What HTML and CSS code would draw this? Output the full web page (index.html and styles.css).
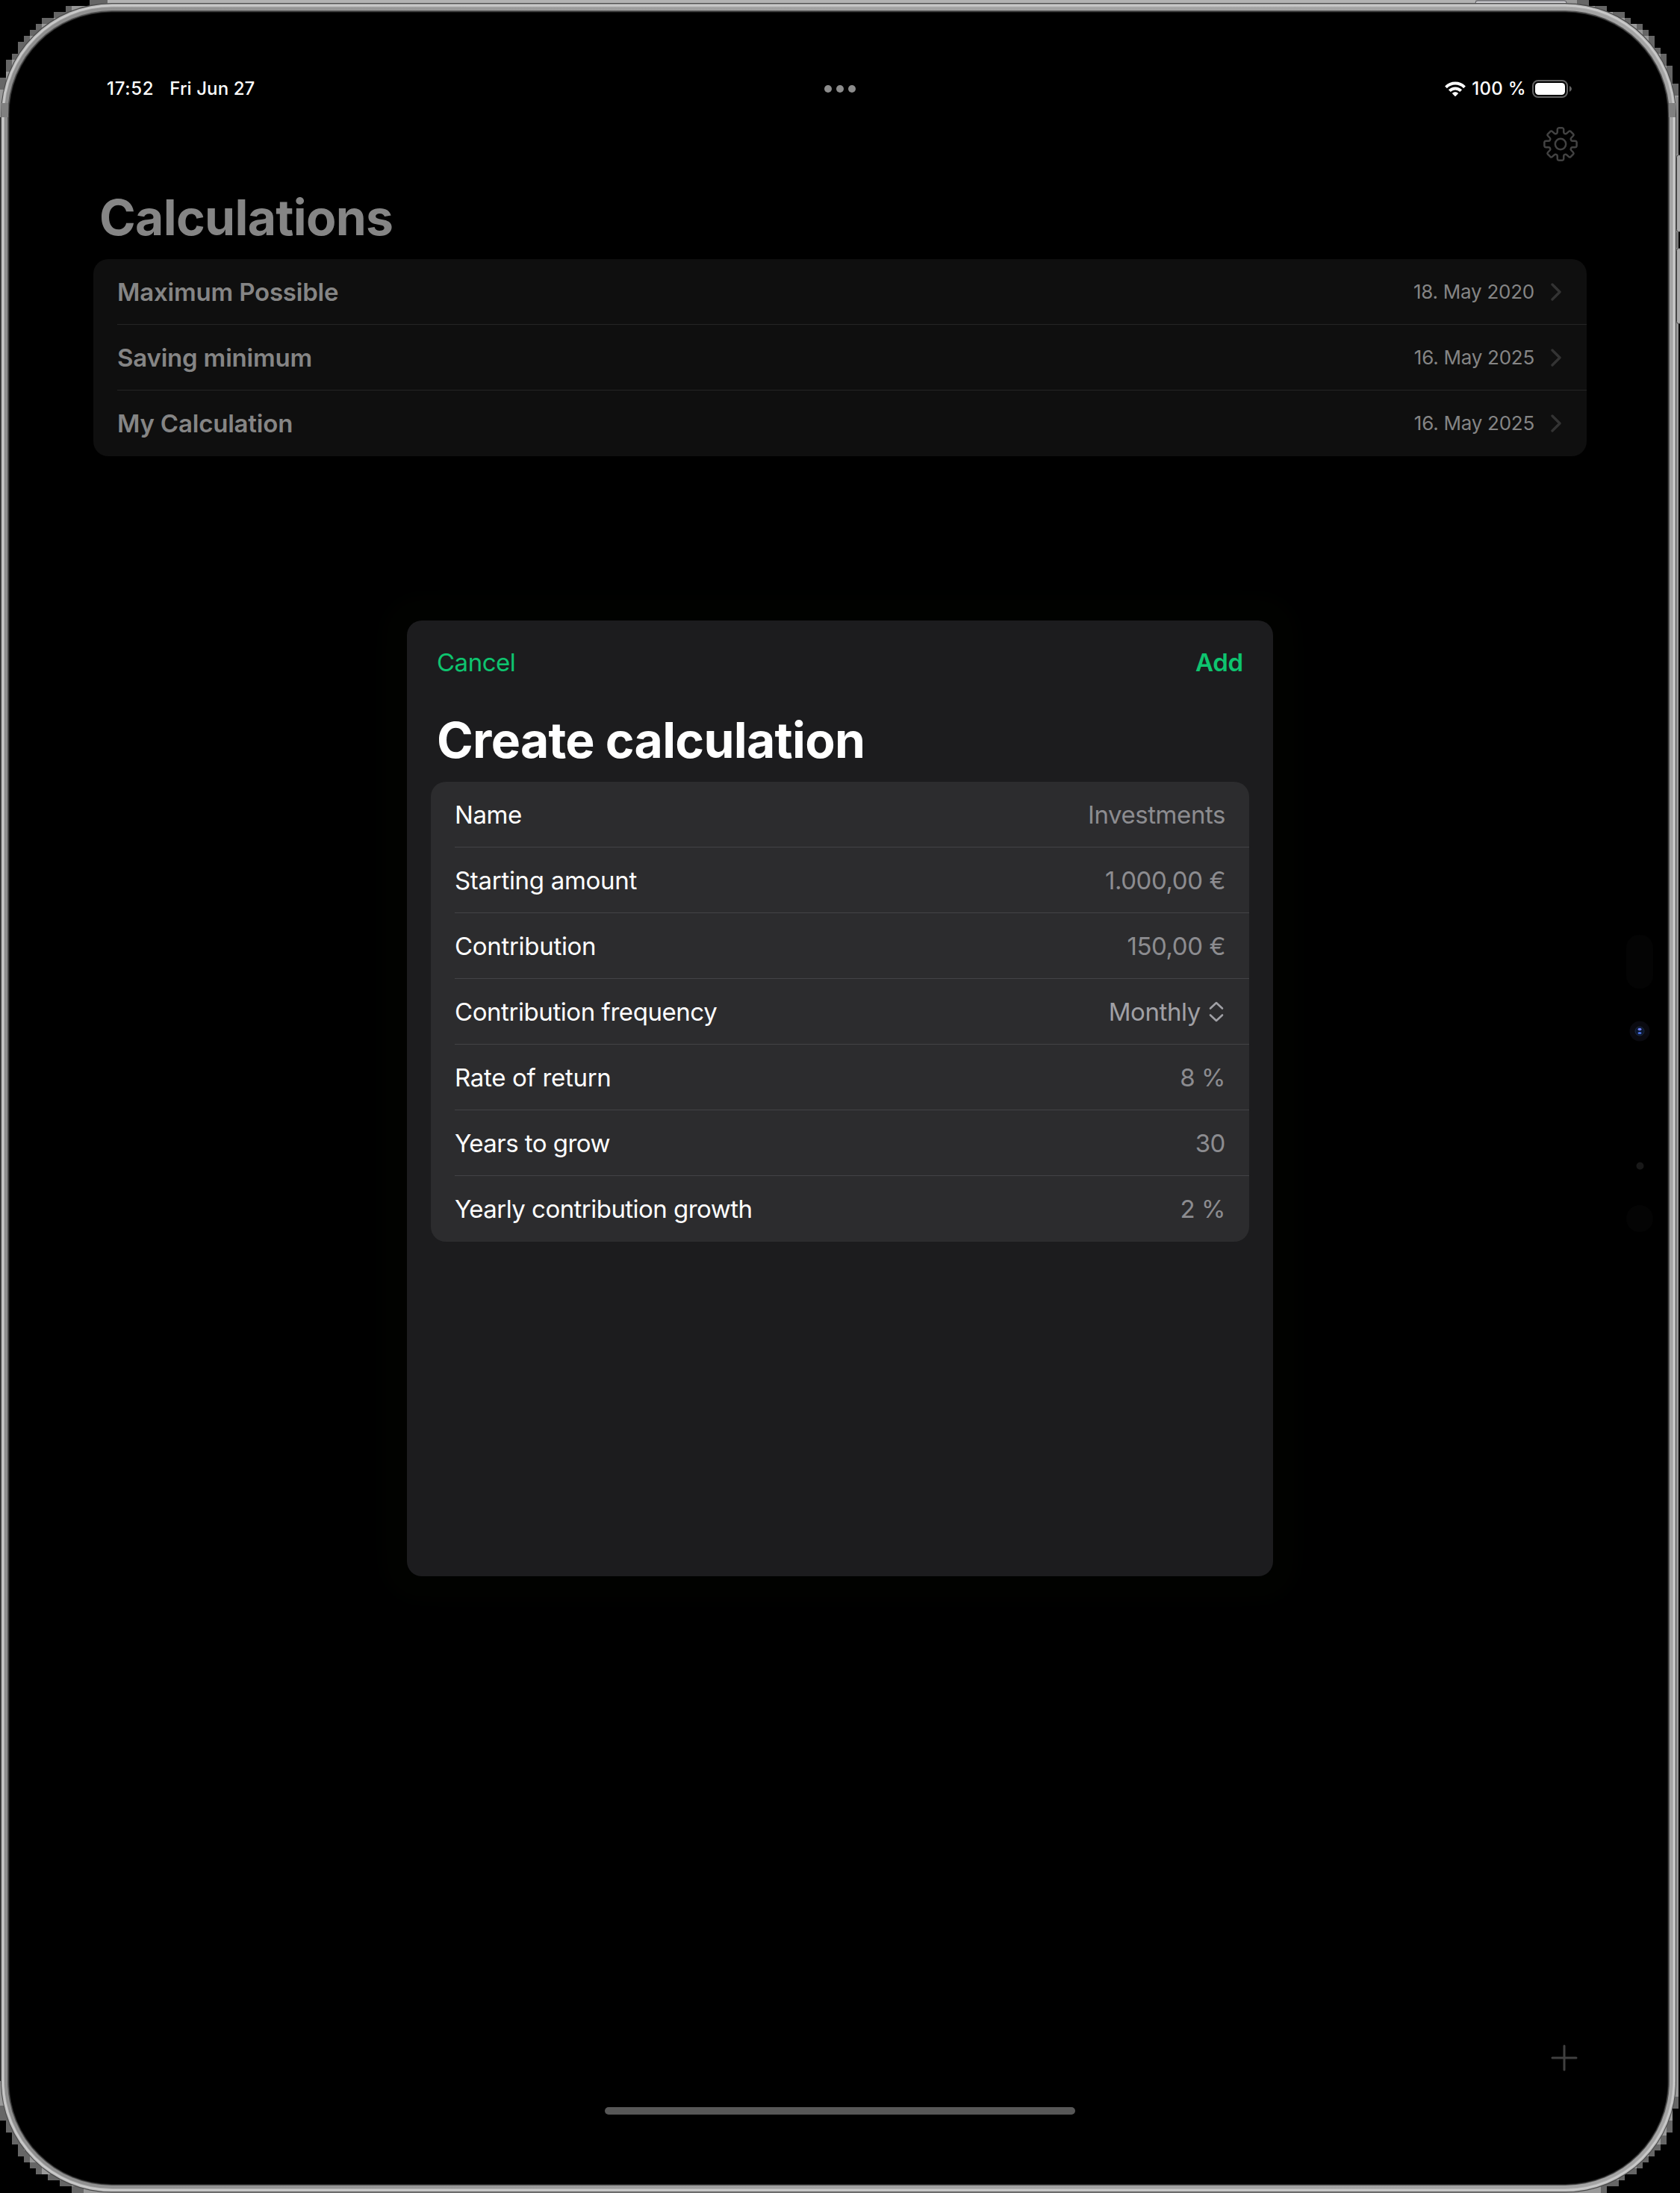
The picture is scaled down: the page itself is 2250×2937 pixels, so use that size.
FILE: index.html
```html
<!DOCTYPE html>
<html lang="en">
<head>
<meta charset="utf-8">
<title>Calculations</title>
<link rel="stylesheet" href="styles.css">
</head>
<body>
<div class="device">
  <svg class="bezel" viewBox="0 0 2250 2937" aria-hidden="true">
    <defs>
      <linearGradient id="metal" x1="0" y1="0" x2="1" y2="0"><stop offset="0" stop-color="#8e8e8e"/><stop offset=".5" stop-color="#a2a2a2"/><stop offset="1" stop-color="#a4a4a4"/></linearGradient>
    </defs>
    <g shape-rendering="crispEdges">
      <path fill="#666" d="M120 0H2128V8H2152V16H2176V24H2184V32H2200V40H2208V48H2216V64H2224V72H2232V88H2240V112H2248V2824H2240V2856H2232V2872H2224V2880H2216V2888H2208V2896H2200V2904H2192V2912H2176V2920H2168V2928H2152V2937H96V2928H80V2920H64V2912H48V2904H40V2896H32V2888H24V2872H16V2856H8V2840H0V104H8V80H16V72H24V56H32V48H40V40H48V32H56V24H72V16H88V8H120Z"/>
      <path fill="#999" d="M144 0H2112V8H2136V16H2160V24H2176V32H2192V40H2200V48H2208V64H2216V72H2224V88H2232V112H2240V128H2248V2808H2240V2840H2232V2860H2224V2872H2208V2888H2192V2904H2168V2920H2144V2937H112V2928H96V2920H80V2912H56V2896H40V2880H32V2864H24V2848H16V2832H8V2820H0V120H8V96H16V80H32V64H40V48H56V32H72V24H96V8H144Z"/>
      <rect x="144" y="0" width="1832" height="4" fill="#b2b2b2"/>
      <rect x="0" y="157" width="1" height="2630" fill="#333"/>
    </g>
    <rect x="1976" y="1" width="122" height="8" rx="3" fill="#c9c9cd" stroke="#55555a"/>
    <rect x="2245" y="130" width="3" height="76" fill="#888"/>
    <rect x="2245" y="311" width="3" height="21" fill="#777"/>
    <rect x="2245.500" y="207.500" width="6" height="103" rx="3" fill="#aaa" stroke="#444"/>
    <rect x="2245.500" y="332.500" width="6" height="101" rx="3" fill="#aaa" stroke="#444"/>
    <rect x="1" y="4" width="2244" height="2932.500" rx="149" fill="#4a4a4a"/>
    <rect x="2" y="5.300" width="2242" height="2930" rx="148" fill="#bcbcbc"/>
    <rect x="3.500" y="6.800" width="2239" height="2927" rx="146.500" fill="#cccccc"/>
    <rect x="5" y="8.500" width="2236" height="2923.500" rx="145" fill="#b2b2b2"/>
    <rect x="6" y="9.500" width="2234" height="2921.500" rx="144" fill="url(#metal)"/>
    <rect x="10" y="14" width="2226" height="2913" rx="140" fill="#555"/>
    <rect x="1.500" y="138" width="9.500" height="19" fill="#808080"/>
    <rect x="2235" y="138" width="9" height="19" fill="#808080"/>
    <rect x="11.500" y="15.500" width="2223" height="2910.500" rx="138" fill="#242424"/>
    <rect x="12.500" y="16.500" width="2221" height="2908.500" rx="137" fill="#000"/>
    <rect x="2178" y="1252" width="36" height="72" rx="17" fill="#040404"/>
    <circle cx="2196" cy="1381" r="13.500" fill="#0a0a10"/>
    <circle cx="2196" cy="1381" r="6" fill="#0b1730" stroke="#1c2a40"/>
    <ellipse cx="2196" cy="1378.500" rx="2.500" ry="1.800" fill="#6d7df0"/>
    <ellipse cx="2196" cy="1383.500" rx="2.500" ry="1.500" fill="#4a70e0"/>
    <circle cx="2196.500" cy="1561.500" r="5" fill="#181818"/>
    <circle cx="2196" cy="1632" r="18" fill="#040404"/>
  </svg>

  <header class="status">
    <div class="status-left"><span class="time">17:52</span><span class="day">Fri Jun 27</span></div>
    <div class="dots"><i></i><i></i><i></i></div>
    <div class="status-right">
      <svg class="wifi" viewBox="0 0 28 21"><path fill="none" stroke="#fff" stroke-width="4" d="M1.500 7.800C8.500 .8 19.500 .8 26.500 7.800M6.300 12.700C10.700 8.300 17.300 8.300 21.700 12.700"/><path fill="#fff" d="M9.800 16C12.200 13.800 15.800 13.800 18.200 16L14.600 19.800Q14 20.400 13.400 19.800Z"/></svg>
      <span class="pct">100 %</span>
      <svg class="battery" viewBox="0 0 54 24"><rect x="1" y="1" width="46" height="22" rx="7" fill="none" stroke="#636363" stroke-width="2"/><rect x="4" y="4" width="40" height="16" rx="4.500" fill="#fff"/><path d="M50 8Q53 9.500 53 12T50 16Z" fill="#636363"/></svg>
    </div>
  </header>

  <main class="page">
    <div class="toolbar">
      <svg class="gear" viewBox="-24 -24 48 48" fill="none" stroke="#424242" stroke-width="2.500" stroke-linejoin="round"><circle r="7.200"/><path id="gear" d=""/></svg>
    </div>
    <h1 class="title">Calculations</h1>
    <ul class="list">
      <li class="item"><span class="name">Maximum Possible</span><span class="date">18. May 2020</span><svg class="chev" viewBox="0 0 14 24"><path d="M2 2L12 12L2 22"/></svg></li>
      <li class="item"><span class="name">Saving minimum</span><span class="date">16. May 2025</span><svg class="chev" viewBox="0 0 14 24"><path d="M2 2L12 12L2 22"/></svg></li>
      <li class="item"><span class="name">My Calculation</span><span class="date">16. May 2025</span><svg class="chev" viewBox="0 0 14 24"><path d="M2 2L12 12L2 22"/></svg></li>
    </ul>
  </main>
  <footer class="bottom">
    <svg class="plus" viewBox="0 0 36 36"><path d="M18 2V34M2 18H34"/></svg>
    <div class="home"></div>
  </footer>

  <section class="modal">
    <div class="actions"><span class="cancel">Cancel</span><span class="add">Add</span></div>
    <h2 class="modal-title">Create calculation</h2>
    <div class="form">
      <div class="row"><span>Name</span><span class="value">Investments</span></div>
      <div class="row"><span class="loose">Starting amount</span><span class="value">1.000,00 €</span></div>
      <div class="row"><span class="loose">Contribution</span><span class="value">150,00 €</span></div>
      <div class="row"><span>Contribution frequency</span><span class="value pick">Monthly<svg class="updown" viewBox="0 0 20 28"><path d="M2 9.500L10 2L18 9.500M2 18.500L10 26L18 18.500"/></svg></span></div>
      <div class="row"><span class="loose">Rate of return</span><span class="value">8 %</span></div>
      <div class="row"><span class="tight">Years to grow</span><span class="value">30</span></div>
      <div class="row"><span class="tight">Yearly contribution growth</span><span class="value">2 %</span></div>
    </div>
  </section>
</div>
<script src="gear.js"></script>
</body>
</html>
```
FILE: gear.js
```js
// Builds the eight-toothed outline of the settings icon.
const point = (r, deg) => {
  const a = deg * Math.PI / 180;
  return (r * Math.cos(a)).toFixed(2) + " " + (r * Math.sin(a)).toFixed(2);
};
let outline = "";
for (let i = 0; i < 8; i++) {
  const c = i * 45 - 90;
  outline += (i ? "L" : "M") + point(15.2, c - 19) +
    "Q" + point(15.6, c - 16) + " " + point(16.5, c - 15) +
    "L" + point(20.2, c - 12) + "Q" + point(21.8, c - 11) + " " + point(21.8, c - 7) +
    "L" + point(21.8, c + 7) + "Q" + point(21.8, c + 11) + " " + point(20.2, c + 12) +
    "L" + point(16.5, c + 15) + "Q" + point(15.6, c + 16) + " " + point(15.2, c + 19);
}
document.getElementById("gear").setAttribute("d", outline + "Z");
```
FILE: styles.css
```css
* { box-sizing: border-box; }
body { margin: 0; background: #000; font-family: Inter, "Liberation Sans", sans-serif; color: #fff; }
h1, h2, ul { margin: 0; padding: 0; list-style: none; }
.device { position: relative; width: 2250px; height: 2937px; overflow: hidden; display: flex; flex-direction: column; padding: 103px 125px 0; }
.device > * { position: relative; }
.device > .bezel { position: absolute; left: 0; top: 0; width: 2250px; height: 2937px; }

.status { display: grid; grid-template-columns: 1fr auto 1fr; align-items: center; height: 32px; padding: 0 19px 0 18px; font-size: 24px; font-weight: 500; line-height: 32px; }
.status-left { display: flex; gap: 21px; }
.time { letter-spacing: .7px; }
.day { letter-spacing: .1px; }
.pct { letter-spacing: .3px; }
.dots { display: flex; gap: 6px; }
.dots i { width: 10px; height: 10px; border-radius: 50%; background: #8c8c8c; }
.status-right { display: flex; justify-content: flex-end; align-items: center; }
.wifi { width: 28px; height: 21px; margin-right: 8px; }
.battery { width: 54px; height: 24px; margin-left: 8px; }

.toolbar { display: flex; justify-content: flex-end; padding: 34px 11px 0 0; height: 116px; }
.gear { width: 48px; height: 48px; }
.title { height: 96px; padding-left: 8px; font-size: 66px; line-height: 80px; font-weight: 700; letter-spacing: -.7px; color: #858585; }
.list { height: 264px; border-radius: 20px; background: #0f0f0f; }
.item { position: relative; display: flex; align-items: center; height: 88px; padding: 0 34px 0 32px; color: #858585; }
.item + .item::before, .row + .row::before { content: ""; position: absolute; left: 32px; right: 0; top: -1px; height: 1px; background: #242424; }
.name { flex: 1; font-size: 33px; font-weight: 600; letter-spacing: -.2px; }
.date { font-size: 26px; line-height: 32px; margin-top: -1px; letter-spacing: -.25px; }
.chev { width: 14px; height: 24px; margin-left: 22px; fill: none; stroke: #333; stroke-width: 3.400; stroke-linecap: round; stroke-linejoin: round; }

.bottom { margin-top: auto; height: 200px; display: flex; flex-direction: column; }
.plus { align-self: flex-end; width: 36px; height: 36px; margin: 1px 12.500px 0 0; fill: none; stroke: #404040; stroke-width: 3; stroke-linecap: round; }
.home { align-self: center; width: 630px; height: 10px; margin-top: 48px; border-radius: 5px; background: #575757; }

.device > .modal { position: absolute; left: 545px; top: 831px; width: 1160px; height: 1280px; padding: 0 32px; border-radius: 20px; background: #1c1c1e; box-shadow: 0 0 30px 34px #020301, 0 0 60px 100px #010100; }
.actions { display: flex; justify-content: space-between; padding: 36px 8px 0; font-size: 33px; line-height: 40px; color: #0ec46f; }
.cancel { letter-spacing: -.5px; }
.add { font-weight: 600; letter-spacing: -.2px; }
.modal-title { height: 140px; padding: 44px 0 0 8px; font-size: 66px; line-height: 80px; font-weight: 700; letter-spacing: -.72px; }
.form { height: 616px; border-radius: 20px; background: #2c2c2e; }
.row { position: relative; display: flex; justify-content: space-between; align-items: center; height: 88px; padding: 0 32px; font-size: 33px; letter-spacing: -.43px; }
.row + .row::before { background: #434346; }
.loose { letter-spacing: -.3px; }
.tight { letter-spacing: -.54px; }
.value { color: #8c8c90; }
.pick { display: flex; align-items: center; color: #a0a0a5; letter-spacing: -.4px; }
.updown { width: 20px; height: 28px; margin: 0 2px 0 11px; fill: none; stroke: #a0a0a5; stroke-width: 2.600; stroke-linecap: round; stroke-linejoin: round; }
```
